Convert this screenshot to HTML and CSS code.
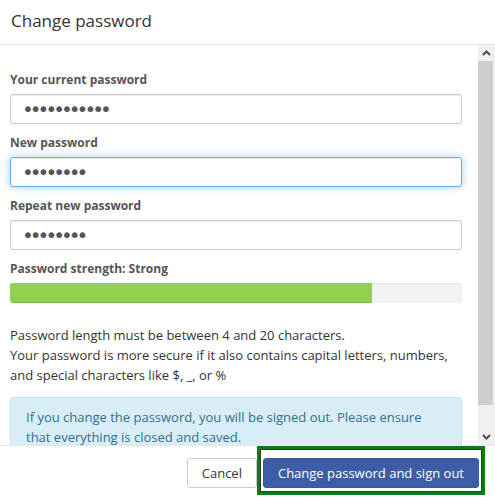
FILE: index.html
```html
<!DOCTYPE html>
<html>
<head>
    <title>Change password</title>
    <link rel="stylesheet" href="styles.css">
</head>
<body>
    <div class="modal">
        <div class="modal-header">
            <h4 class="modal-title">Change password</h4>
        </div>
        <div class="modal-main">
            <div class="modal-body">
                <div class="form-group">
                    <label for="currentPassword">Your current password</label>
                    <input type="password" id="currentPassword" class="form-control" value="12345678901">
                </div>
                <div class="form-group">
                    <label for="newPassword">New password</label>
                    <input type="password" id="newPassword" class="form-control focused" value="abcdefgh">
                </div>
                <div class="form-group">
                    <label for="repeatPassword">Repeat new password</label>
                    <input type="password" id="repeatPassword" class="form-control" value="abcdefgh">
                </div>
                <div class="form-group">
                    <label>Password strength: Strong</label>
                    <div class="progress">
                        <div class="progress-bar" style="width: 80%"></div>
                    </div>
                </div>
                <p class="hint">
                    Password length must be between 4 and 20 characters.<br>
                    Your password is more secure if it also contains capital letters, numbers,<br>
                    and special characters like $, _, or %
                </p>
                <div class="alert">
                    If you change the password, you will be signed out. Please ensure<br>
                    that everything is closed and saved.
                </div>
            </div>
            <div class="scrollbar">
                <div class="scroll-btn">
                    <svg width="9" height="6" viewBox="0 0 9 6"><polyline points="1,5 4.5,1.5 8,5" fill="none" stroke="#505050" stroke-width="2"/></svg>
                </div>
                <div class="scroll-track">
                    <div class="scroll-thumb"></div>
                </div>
                <div class="scroll-btn">
                    <svg width="9" height="6" viewBox="0 0 9 6"><polyline points="1,1 4.5,4.5 8,1" fill="none" stroke="#505050" stroke-width="2"/></svg>
                </div>
            </div>
        </div>
        <div class="modal-footer">
            <button class="btn btn-default">Cancel</button>
            <span class="highlight">
                <button class="btn btn-primary">Change password and sign out</button>
            </span>
        </div>
    </div>
</body>
</html>
```

FILE: styles.css
```css
body {
    margin: 0;
    background-color: #fff;
    font-family: "Open Sans", "Noto Sans", sans-serif;
    font-size: 13px;
    color: #333;
}
.modal {
    width: 495px;
    height: 498px;
    display: flex;
    flex-direction: column;
    overflow: hidden;
}
/* Header */
.modal-header {
    height: 45px;
    padding: 9px 11px 0;
    box-sizing: border-box;
    border-bottom: 1px solid #e5e5e5;
    flex-shrink: 0;
}
.modal-title {
    margin: 0;
    font-size: 17px;
    font-weight: normal;
    line-height: 24px;
    color: #333;
}
/* Body with scrollbar */
.modal-main {
    height: 400px;
    display: flex;
    flex-shrink: 0;
}
.modal-body {
    flex-grow: 1;
    padding: 26px 16px 0 10px;
    overflow: hidden;
}
.form-group {
    margin-bottom: 10px;
}
.form-group label {
    display: block;
    margin-bottom: 5px;
    font-weight: bold;
    font-size: 12px;
    line-height: 18px;
    color: #555;
}
.form-control {
    display: block;
    width: 100%;
    height: 30px;
    box-sizing: border-box;
    padding: 0 12px 0 11px;
    border: 1px solid #ccc;
    border-radius: 3px;
    font-family: "DejaVu Sans", sans-serif;
    font-size: 20px;
    color: #555;
    letter-spacing: -4px;
    box-shadow: inset 0 1px 1px rgba(0,0,0,.075);
    outline: none;
}
.form-control.focused {
    border-color: #66afe9;
    box-shadow: inset 0 1px 1px rgba(0,0,0,.075), 0 0 8px rgba(102,175,233,.6);
}
.progress {
    height: 20px;
    margin-bottom: 22px;
    background-color: #f3f3f3;
    border-radius: 3px;
    overflow: hidden;
    box-shadow: inset 0 1px 2px rgba(0,0,0,.08);
}
.progress-bar {
    height: 100%;
    background-color: #92d050;
    box-shadow: inset 0 -1px 0 rgba(0,0,0,.15);
}
.hint {
    margin: 0 0 12px;
    font-size: 13px;
    line-height: 20px;
    color: #333;
}
.alert {
    padding: 9px 15px;
    border: 1px solid #bce8f1;
    border-radius: 3px;
    background-color: #d9edf7;
    color: #31708f;
    font-size: 13px;
    line-height: 20px;
}
.scrollbar {
    width: 17px;
    flex-shrink: 0;
    display: flex;
    flex-direction: column;
    background-color: #f0f0f0;
}
.scroll-btn {
    height: 16px;
    display: flex;
    align-items: center;
    justify-content: center;
}
.scroll-track {
    flex-grow: 1;
    padding: 0 2px 24px 0;
}
.scroll-thumb {
    height: 100%;
    background-color: #cdcdcd;
}
/* Footer */
.modal-footer {
    flex-grow: 1;
    border-top: 1px solid #e5e5e5;
    display: flex;
    justify-content: flex-end;
    align-items: flex-start;
    padding-right: 10px;
}
.btn {
    height: 30px;
    padding: 0 14px;
    border: 1px solid #ccc;
    border-radius: 3px;
    font-family: "Open Sans", "Noto Sans", sans-serif;
    font-size: 13px;
    cursor: pointer;
}
.btn-default {
    margin-top: 12px;
    background-color: #fff;
    color: #333;
}
.btn-primary {
    display: block;
    background-color: #3d5ea7;
    border-color: #3a5a9f;
    color: #fff;
}
.highlight {
    display: block;
    padding: 9px 3px 4px;
    border: 3px solid #127c12;
    box-shadow: inset 0 0 0 1px #2a3a2a;
    background-color: #fff;
}
```
